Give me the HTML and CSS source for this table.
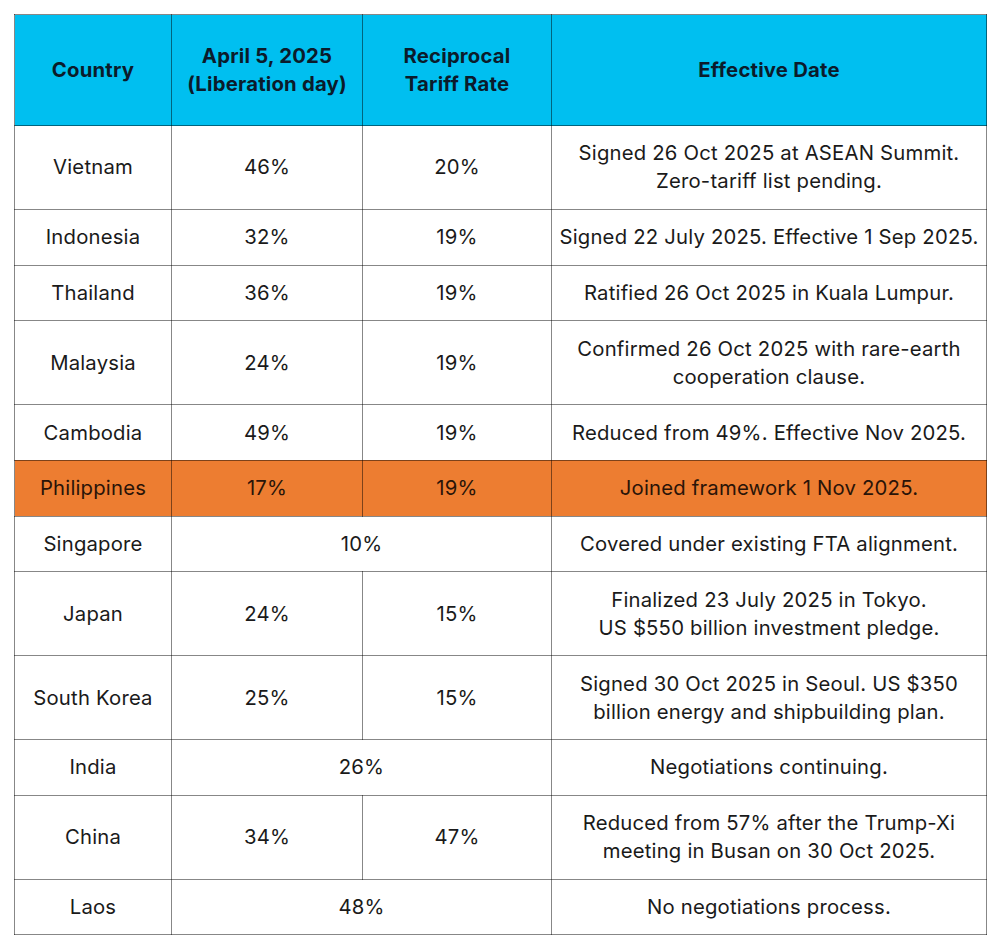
FILE: index.html
```html
<!DOCTYPE html>
<html lang="en">
<head>
<meta charset="utf-8">
<title>Reciprocal Tariff Rates</title>
<link rel="stylesheet" href="styles.css">
</head>
<body>
<div class="wrap">
<table class="tariffs">
  <colgroup>
    <col class="c-country">
    <col class="c-april">
    <col class="c-rate">
    <col class="c-date">
  </colgroup>
  <thead>
    <tr>
      <th>Country</th>
      <th>April 5, 2025<br>(Liberation day)</th>
      <th>Reciprocal<br>Tariff Rate</th>
      <th>Effective Date</th>
    </tr>
  </thead>
  <tbody>
    <tr><td>Vietnam</td><td>46%</td><td>20%</td><td>Signed 26 Oct 2025 at ASEAN Summit.<br>Zero-tariff list pending.</td></tr>
    <tr><td>Indonesia</td><td>32%</td><td>19%</td><td>Signed 22 July 2025. Effective 1 Sep 2025.</td></tr>
    <tr><td>Thailand</td><td>36%</td><td>19%</td><td>Ratified 26 Oct 2025 in Kuala Lumpur.</td></tr>
    <tr><td>Malaysia</td><td>24%</td><td>19%</td><td>Confirmed 26 Oct 2025 with rare-earth<br>cooperation clause.</td></tr>
    <tr><td>Cambodia</td><td>49%</td><td>19%</td><td>Reduced from 49%. Effective Nov 2025.</td></tr>
    <tr class="hl"><td>Philippines</td><td>17%</td><td>19%</td><td>Joined framework 1 Nov 2025.</td></tr>
    <tr><td>Singapore</td><td colspan="2">10%</td><td>Covered under existing FTA alignment.</td></tr>
    <tr><td>Japan</td><td>24%</td><td>15%</td><td>Finalized 23 July 2025 in Tokyo.<br>US $550 billion investment pledge.</td></tr>
    <tr><td>South Korea</td><td>25%</td><td>15%</td><td>Signed 30 Oct 2025 in Seoul. US $350<br>billion energy and shipbuilding plan.</td></tr>
    <tr><td>India</td><td colspan="2">26%</td><td>Negotiations continuing.</td></tr>
    <tr><td>China</td><td>34%</td><td>47%</td><td>Reduced from 57% after the Trump-Xi<br>meeting in Busan on 30 Oct 2025.</td></tr>
    <tr><td>Laos</td><td colspan="2">48%</td><td>No negotiations process.</td></tr>
  </tbody>
</table>
</div>
</body>
</html>
```
FILE: styles.css
```css
html, body {
  margin: 0;
  padding: 0;
  background: #ffffff;
}
.wrap {
  padding: 14px 14px 0 14px;
}
.tariffs {
  border-collapse: collapse;
  width: 972px;
  table-layout: fixed;
  font-family: "Inter", "Liberation Sans", sans-serif;
  font-size: 20.3px;
  letter-spacing: 0.2px;
  line-height: 28px;
  color: #1a1a1a;
}
.c-country { width: 157px; }
.c-april { width: 191px; }
.c-rate { width: 189px; }
.c-date { width: 435px; }
.tariffs th,
.tariffs td {
  border: 1px solid rgba(0, 0, 0, 0.47);
  text-align: center;
  vertical-align: middle;
  padding: 13.4px 0;
  white-space: nowrap;
}
.tariffs th {
  background: #00bff0;
  color: #0b1b2b;
  font-weight: 700;
  height: 110px;
  padding: 0;
}
.tariffs tr.hl td {
  background: #ed7d31;
  color: #2a1408;
}
```
